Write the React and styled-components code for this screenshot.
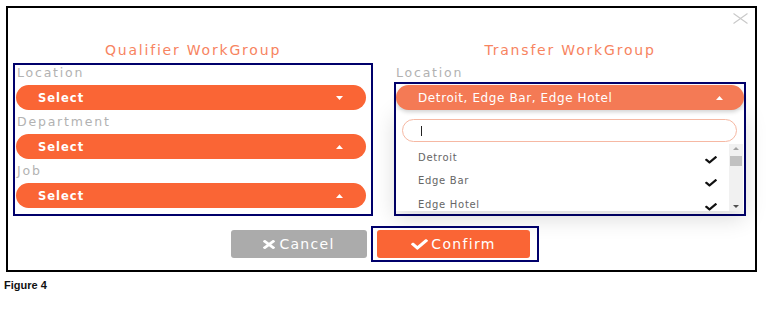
import React from 'react';
import styled, { createGlobalStyle } from 'styled-components';

const GlobalStyle = createGlobalStyle`
  body {
    margin: 0;
    background: #fff;
    font-family: "DejaVu Sans", Verdana, sans-serif;
  }
`;

const Page = styled.div`
  padding: 6px 0 0 4px;
`;

const Frame = styled.div`
  position: relative;
  box-sizing: border-box;
  width: 751px;
  height: 266px;
  margin-left: 2px;
  border: 2px solid #000;
  background: #fff;
  padding: 0 9px 0 5px;
`;

const Close = styled.svg`
  position: absolute;
  top: 5px;
  right: 7px;
`;

const Columns = styled.div`
  display: grid;
  grid-template-columns: 360px 352px;
  column-gap: 21px;
`;

const Column = styled.div`
  display: flex;
  flex-direction: column;
`;

const Title = styled.div`
  margin-top: 32px;
  line-height: 20px;
  text-align: center;
  font-size: 14px;
  letter-spacing: 1.8px;
  color: #f7845f;
`;

const Outline = styled.div`
  border: 2px solid #00006b;
  margin-top: ${p => p.$top}px;
  padding: ${p => p.$pad};
`;

const Label = styled.div`
  margin-top: ${p => p.$top || 0}px;
  padding-left: ${p => p.$inset}px;
  line-height: 16px;
  font-size: 12.5px;
  letter-spacing: 1.8px;
  color: #b2b2b2;
`;

const SelectBar = styled.div`
  display: flex;
  align-items: center;
  justify-content: space-between;
  height: 25px;
  margin-top: 4px;
  padding: 0 23px 0 22px;
  border-radius: 13px;
  background: ${p => (p.$open ? '#f47a55' : '#fa6535')};
  box-shadow: ${p => (p.$open ? '0 2px 4px rgba(0,0,0,0.18)' : 'none')};
  color: #fff;
  font-size: ${p => (p.$open ? 12 : 11.5)}px;
  font-weight: ${p => (p.$open ? 'normal' : 'bold')};
  letter-spacing: ${p => (p.$open ? 0.6 : 1)}px;
`;

const OpenSelect = styled(SelectBar)`
  margin-top: 0;
  padding: 0 21px 0 22px;
  position: relative;
  z-index: 1;
`;

const Caret = ({ up }) => (
  <svg width="7" height="4" viewBox="0 0 7 4">
    <polygon points={up ? '0,4 7,4 3.5,0' : '0,0 7,0 3.5,4'} fill="#fff" />
  </svg>
);

const Panel = styled.div`
  background: #fff;
  box-shadow: 0 6px 22px rgba(0, 0, 0, 0.16);
  padding: 9px 0 0 0;
`;

const Search = styled.div`
  display: flex;
  align-items: center;
  height: 23px;
  box-sizing: border-box;
  margin: 0 7px 0 6px;
  padding-left: 18px;
  border: 1px solid #f6b8a3;
  border-radius: 12px;
`;

const Cursor = styled.span`
  width: 1px;
  height: 10px;
  background: #222;
`;

const ListArea = styled.div`
  display: flex;
  height: 67px;
  margin-top: 2px;
  overflow: hidden;
`;

const Items = styled.div`
  flex: 1;
  padding: 1.5px 12px 0 22px;
`;

const Item = styled.div`
  display: flex;
  align-items: center;
  justify-content: space-between;
  height: 23.5px;
  font-size: 10px;
  letter-spacing: 0.7px;
  color: #666;

  > svg {
    margin-top: 5px;
  }
`;

const Scrollbar = styled.div`
  display: flex;
  flex-direction: column;
  align-items: center;
  width: 14px;
  margin-right: 1px;
  background: #f1f1f1;
`;

const Thumb = styled.div`
  width: 12px;
  height: 10px;
  margin-top: 4px;
  background: #c1c1c1;
`;

const Spacer = styled.div`
  flex: 1;
`;

const Actions = styled.div`
  display: flex;
  justify-content: center;
  align-items: center;
  gap: 4px;
  margin-top: 10px;
  padding-left: 11px;
`;

const Button = styled.div`
  display: flex;
  align-items: center;
  justify-content: center;
  gap: ${p => p.$gap}px;
  width: ${p => p.$width}px;
  height: 28px;
  border-radius: 3px;
  background: ${p => p.$bg};
  color: #fff;
  font-size: 14px;
  letter-spacing: 1.3px;
`;

const ConfirmWrap = styled.div`
  border: 2px solid #00006b;
  padding: 2px 7px 2px 4px;
`;

const Caption = styled.div`
  margin-top: 6px;
  line-height: 14px;
  font-family: "Liberation Sans", Arial, sans-serif;
  font-weight: bold;
  font-size: 11px;
  color: #111;
`;

const checkPath =
  'M173.898 439.404l-166.4-166.4c-9.997-9.997-9.997-26.206 0-36.204l36.203-36.204c9.997-9.998 26.207-9.998 36.204 0L192 312.69 432.095 72.596c9.997-9.997 26.207-9.997 36.204 0l36.203 36.204c9.997 9.997 9.997 26.206 0 36.204l-294.4 294.401c-9.998 9.997-26.207 9.997-36.204-.001z';

const timesPath =
  'M242.72 256l100.07-100.07c12.28-12.28 12.28-32.19 0-44.48l-22.24-22.24c-12.28-12.28-32.19-12.28-44.48 0L176 189.28 75.93 89.21c-12.28-12.28-32.19-12.28-44.48 0L9.21 111.45c-12.28 12.28-12.28 32.19 0 44.48L109.28 256 9.21 356.070c-12.28 12.28-12.28 32.19 0 44.48l22.24 22.24c12.28 12.28 32.2 12.28 44.48 0L176 322.72l100.07 100.07c12.28 12.28 32.2 12.28 44.48 0l22.24-22.24c12.28-12.28 12.28-32.19 0-44.48L242.72 256z';

const Check = ({ w, h, color }) => (
  <svg width={w} height={h} viewBox="0 60 512 400" preserveAspectRatio="none">
    <path d={checkPath} fill={color} />
  </svg>
);

const fields = [
  { label: 'Department', up: true },
  { label: 'Job', up: true },
];

const locations = ['Detroit', 'Edge Bar', 'Edge Hotel'];

const App = () => (
  <>
    <GlobalStyle />
    <Page>
      <Frame>
        <Close width="15" height="11" viewBox="0 0 15 11">
          <path d="M0.5 0.5 L14.5 10.5 M14.5 0.5 L0.5 10.5" stroke="#c9c9c9" strokeWidth="1.1" />
        </Close>
        <Columns>
          <Column>
            <Title>Qualifier WorkGroup</Title>
            <Outline $top={3} $pad="0 5px 6px 1px">
              <Label $inset={1}>Location</Label>
              <SelectBar>
                Select
                <Caret />
              </SelectBar>
              {fields.map(f => (
                <React.Fragment key={f.label}>
                  <Label $inset={1} $top={4}>{f.label}</Label>
                  <SelectBar>
                    Select
                    <Caret up={f.up} />
                  </SelectBar>
                </React.Fragment>
              ))}
            </Outline>
          </Column>
          <Column>
            <Title>Transfer WorkGroup</Title>
            <Label $inset={2} $top={5}>Location</Label>
            <Outline $top={1} $pad="1px 0 3px 0">
              <OpenSelect $open>
                Detroit, Edge Bar, Edge Hotel
                <Caret up />
              </OpenSelect>
              <Panel>
                <Search>
                  <Cursor />
                </Search>
                <ListArea>
                  <Items>
                    {locations.map(name => (
                      <Item key={name}>
                        {name}
                        <Check w={12} h={8} color="#111" />
                      </Item>
                    ))}
                  </Items>
                  <Scrollbar>
                    <svg width="6" height="8" viewBox="0 0 6 8">
                      <polygon points="0,6 6,6 3,3" fill="#a3a3a3" />
                    </svg>
                    <Thumb />
                    <Spacer />
                    <svg width="6" height="8" viewBox="0 0 6 8">
                      <polygon points="0,2 6,2 3,5" fill="#505050" />
                    </svg>
                  </Scrollbar>
                </ListArea>
              </Panel>
            </Outline>
          </Column>
        </Columns>
        <Actions>
          <Button $width={136} $bg="#ababab" $gap={4}>
            <svg width="12" height="9" viewBox="0 80 352 352" preserveAspectRatio="none">
              <path d={timesPath} fill="#fff" />
            </svg>
            Cancel
          </Button>
          <ConfirmWrap>
            <Button $width={153} $bg="#fa6535" $gap={3}>
              <Check w={17} h={11} color="#fff" />
              Confirm
            </Button>
          </ConfirmWrap>
        </Actions>
      </Frame>
      <Caption>Figure 4</Caption>
    </Page>
  </>
);

export default App;
